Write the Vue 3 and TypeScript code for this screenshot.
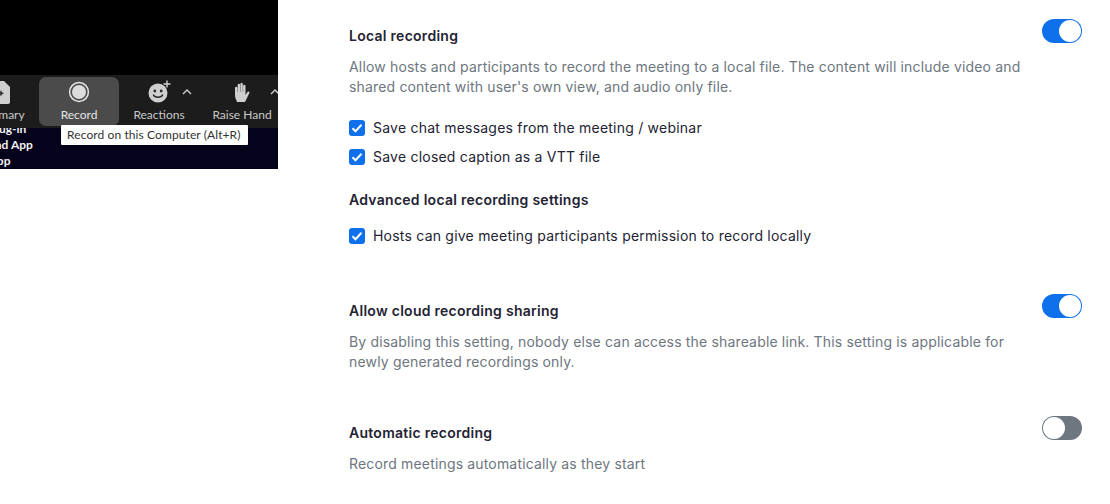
<script setup lang="ts">
interface CheckItem {
  label: string;
}

const localChecks: CheckItem[] = [
  { label: "Save chat messages from the meeting / webinar" },
  { label: "Save closed caption as a VTT file" },
];
</script>

<template>
  <div class="page">
    <div class="shot">
      <div class="shot-video"></div>
      <div class="toolbar">
        <div class="tool tool-summary">
          <svg class="tool-icon" width="24" height="24" viewBox="0 0 24 24">
            <path d="M4 1h13l6 6v15a2 2 0 0 1-2 2H4a2 2 0 0 1-2-2V3a2 2 0 0 1 2-2z" fill="#cfcfcf" />
            <path d="M14 10l1 2.200 2.200 1-2.200 1-1 2.200-1-2.200-2.200-1 2.200-1z" fill="#333" />
          </svg>
          <span>Summary</span>
        </div>
        <div class="tool tool-record">
          <svg class="tool-icon" width="24" height="24" viewBox="0 0 24 24">
            <circle cx="12" cy="12" r="9.4" fill="none" stroke="#e4e4e4" stroke-width="1.5" />
            <circle cx="12" cy="12" r="7" fill="#dcdcdc" />
          </svg>
          <span>Record</span>
        </div>
        <div class="tool tool-reactions">
          <svg class="tool-icon" width="24" height="24" viewBox="0 0 24 24">
            <circle cx="11" cy="13" r="9.500" fill="#cfcfcf" />
            <circle cx="7.800" cy="11" r="1.400" fill="#2a2a2a" />
            <circle cx="14.200" cy="11" r="1.400" fill="#2a2a2a" />
            <path d="M6.500 15c1.200 3 7.800 3 9 0" fill="none" stroke="#2a2a2a" stroke-width="1.500" stroke-linecap="round" />
            <path d="M20 0.500v7M16.500 4h7" stroke="#cfcfcf" stroke-width="1.400" />
          </svg>
          <span>Reactions</span>
          <svg class="caret" width="10" height="6" viewBox="0 0 10 6">
            <path d="M1 5l4-4 4 4" fill="none" stroke="#cfcfcf" stroke-width="1.400" />
          </svg>
        </div>
        <div class="tool tool-hand">
          <svg class="tool-icon" width="24" height="24" viewBox="0 0 24 24">
            <path d="M7 22C6 19 5 18 5 15V8a1.200 1.200 0 0 1 2.400 0v4h.3V5a1.200 1.200 0 0 1 2.400 0v7h.3V4a1.200 1.200 0 0 1 2.400 0v8h.3V6a1.200 1.200 0 0 1 2.400 0v9l2-3c.8-1 2.400-.2 1.900 1L15 22z" fill="#cfcfcf" />
          </svg>
          <span>Raise Hand</span>
          <svg class="caret" width="10" height="6" viewBox="0 0 10 6">
            <path d="M1 5l4-4 4 4" fill="none" stroke="#cfcfcf" stroke-width="1.400" />
          </svg>
        </div>
      </div>
      <div class="shot-desktop">
        <div>Plug-in</div>
        <div class="wide-line">Find App</div>
        <div>App</div>
      </div>
      <div class="tooltip">Record on this Computer (Alt+R)</div>
    </div>

    <div class="settings">
      <section class="setting setting-local">
        <div class="setting-head">
          <h3>Local recording</h3>
          <span class="switch on"><i></i></span>
        </div>
        <p class="desc">
          Allow hosts and participants to record the meeting to a local file. The content will include video and
          shared content with user's own view, and audio only file.
        </p>
        <ul class="checks">
          <li v-for="item in localChecks" :key="item.label">
            <span class="check">
              <svg width="12" height="10" viewBox="0 0 12 10">
                <path d="M1.500 5.200l3 3 6-6.400" fill="none" stroke="#fff" stroke-width="2" />
              </svg>
            </span>
            {{ item.label }}
          </li>
        </ul>
        <h4>Advanced local recording settings</h4>
        <ul class="checks">
          <li>
            <span class="check">
              <svg width="12" height="10" viewBox="0 0 12 10">
                <path d="M1.500 5.200l3 3 6-6.400" fill="none" stroke="#fff" stroke-width="2" />
              </svg>
            </span>
            Hosts can give meeting participants permission to record locally
          </li>
        </ul>
      </section>

      <section class="setting setting-share">
        <div class="setting-head">
          <h3>Allow cloud recording sharing</h3>
          <span class="switch on"><i></i></span>
        </div>
        <p class="desc">
          By disabling this setting, nobody else can access the shareable link. This setting is applicable for
          newly generated recordings only.
        </p>
      </section>

      <section class="setting setting-auto">
        <div class="setting-head">
          <h3>Automatic recording</h3>
          <span class="switch"><i></i></span>
        </div>
        <p class="desc">Record meetings automatically as they start</p>
      </section>
    </div>
  </div>
</template>

<style scoped>
.page {
  display: flex;
  align-items: flex-start;
  width: 1110px;
  height: 504px;
  overflow: hidden;
  background: #fff;
  font-family: Inter, "Liberation Sans", sans-serif;
}

.shot {
  position: relative;
  flex: none;
  display: flex;
  flex-direction: column;
  width: 278px;
  height: 169px;
  font-family: Lato, "Liberation Sans", sans-serif;
}

.shot-video {
  height: 75px;
  background: #000;
}

.toolbar {
  display: flex;
  height: 53px;
  background: #1c1c1c;
  overflow: hidden;
  padding-top: 2px;
  box-sizing: border-box;
}

.tool {
  position: relative;
  flex: none;
  display: flex;
  flex-direction: column;
  align-items: center;
  box-sizing: border-box;
  height: 49px;
  padding-top: 3px;
  color: #c9c9c9;
  font-size: 12px;
  line-height: 16px;
}

.tool-icon {
  margin-bottom: 3px;
}

.tool-summary {
  width: 80px;
  margin-left: -41px;
}

.tool-summary span {
  margin-left: 2px;
}

.tool-record {
  width: 80px;
  background: #4b4b4b;
  border-radius: 7px;
  color: #e6e6e6;
}

.tool-reactions {
  width: 80px;
}

.tool-hand {
  width: 80px;
  margin-left: 3px;
}

.caret {
  position: absolute;
  top: 12px;
}

.tool-reactions .caret {
  right: 7px;
}

.tool-hand .caret {
  right: 2px;
}

.shot-desktop {
  flex: 1;
  overflow: hidden;
  background: #05021c;
  color: #f0f0f0;
  font-size: 12px;
  font-weight: 700;
  line-height: 16px;
  text-indent: -11.5px;
  white-space: nowrap;
}

.shot-desktop div:first-child {
  margin-top: -7px;
}

.shot-desktop .wide-line {
  text-indent: -15px;
}

.tooltip {
  position: absolute;
  left: 61px;
  top: 125px;
  width: 187px;
  height: 20px;
  box-sizing: border-box;
  padding-left: 6px;
  border-radius: 1px;
  background: #fff;
  color: #333;
  font-size: 12px;
  line-height: 20px;
  letter-spacing: 0.1px;
  white-space: nowrap;
}

.settings {
  flex: 1;
  margin-left: 71px;
  margin-right: 28px;
  padding-top: 19px;
}

.setting-head {
  display: flex;
  justify-content: space-between;
  align-items: flex-start;
}

h3,
h4 {
  margin: 0;
  color: #232333;
  font-size: 14px;
  font-weight: 600;
  line-height: 24px;
  letter-spacing: 0.27px;
}

h3 {
  padding-top: 5px;
}

.switch {
  display: block;
  width: 40px;
  height: 24px;
  box-sizing: border-box;
  border-radius: 12px;
  background: #0e71eb;
  padding: 1px;
}

.switch i {
  display: block;
  width: 22px;
  height: 22px;
  border-radius: 50%;
  background: #fff;
  margin-left: 16px;
}

.switch:not(.on) {
  background: #6e7680;
}

.switch:not(.on) i {
  margin-left: 0;
}

.desc {
  margin: 9px 0 0;
  width: 690px;
  color: #6e7680;
  font-size: 14px;
  line-height: 20px;
  letter-spacing: 0.165px;
}

.checks {
  list-style: none;
  margin: 0;
  padding: 0;
}

.checks li {
  display: flex;
  align-items: center;
  gap: 8px;
  height: 29px;
  color: #232333;
  font-size: 14px;
  letter-spacing: 0.22px;
}

.check {
  display: flex;
  align-items: center;
  justify-content: center;
  width: 16px;
  height: 16px;
  border-radius: 3px;
  background: #0e71eb;
}

.setting-local .desc + .checks {
  margin-top: 16px;
}

h4 {
  margin-top: 17px;
}

h4 + .checks {
  margin-top: 9px;
}

.setting-share {
  margin-top: 44px;
}

.setting-auto {
  margin-top: 44px;
}
</style>
